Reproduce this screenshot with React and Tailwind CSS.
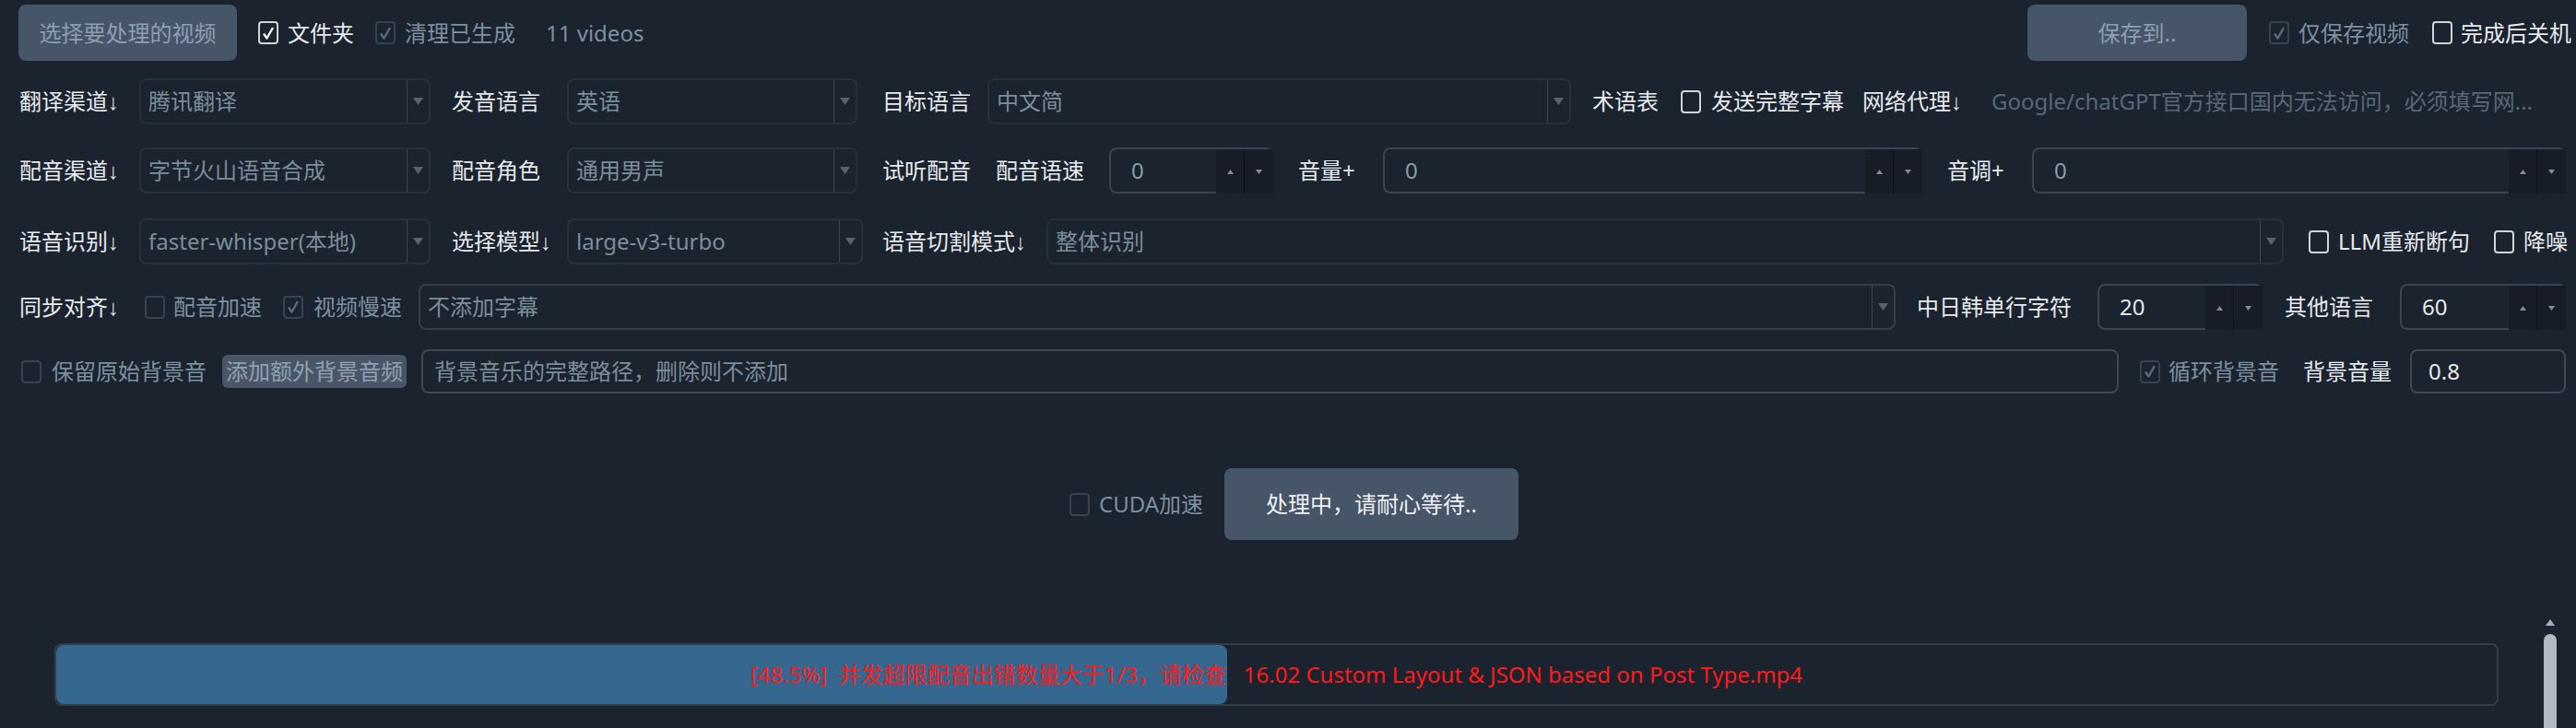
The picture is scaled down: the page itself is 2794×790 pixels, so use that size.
import React from 'react';

const Arrow = () => <span className="font-['Liberation_Sans'] text-[24px]">↓</span>;

function Check({ checked, disabled }) {
  const box = disabled
    ? 'flex h-[25px] w-[22px] shrink-0 items-center justify-center rounded-[4px] border-2 border-[#364352]'
    : 'flex h-[25px] w-[22px] shrink-0 items-center justify-center rounded-[4px] border-2 border-[#cfd4d9]';
  return (
    <span className={box}>
      {checked && (
        <svg width="14" height="16" viewBox="0 0 14 16">
          <path d="M2 8.5 L5.5 13.5 L12 2" fill="none" stroke={disabled ? '#5b6b79' : '#f2f4f6'} strokeWidth="2.4" strokeLinejoin="round" />
        </svg>
      )}
    </span>
  );
}

function Combo({ className, text }) {
  return (
    <div className={`flex h-[50px] shrink-0 items-stretch rounded-[8px] border-2 border-[#26313e] ${className}`}>
      <div className="flex flex-1 items-center overflow-hidden whitespace-nowrap pl-[8px] text-[#7b8d9b]">{text}</div>
      <div className="flex w-[24px] items-center justify-center border-l border-[#3a4553]">
        <svg width="11" height="8" viewBox="0 0 11 8">
          <path d="M0 0 H11 L5.5 8 Z" fill="#56626f" />
        </svg>
      </div>
    </div>
  );
}

function Spin({ className, value, light }) {
  return (
    <div className={`flex h-[50px] shrink-0 items-stretch rounded-[8px] border-2 border-[#3a4554] ${className}`}>
      <div className={light ? 'flex flex-1 items-center pl-[22px] text-[#e6eaee]' : 'flex flex-1 items-center pl-[22px] text-[#8a9dac]'}>{value}</div>
      <div className="-mb-[2px] -mr-[2px] flex">
        <div className="flex w-[31px] items-center justify-center border-r border-[#0e141b] bg-[#161d26]">
          <svg width="7" height="5" viewBox="0 0 7 5"><path d="M0 5 H7 L3.5 0 Z" fill="#7e8d9a" /></svg>
        </div>
        <div className="flex w-[31px] items-center justify-center bg-[#161d26]">
          <svg width="7" height="5" viewBox="0 0 7 5"><path d="M0 0 H7 L3.5 5 Z" fill="#7e8d9a" /></svg>
        </div>
      </div>
    </div>
  );
}

export default function App() {
  return (
    <div className="flex h-[790px] w-full flex-col overflow-hidden whitespace-nowrap bg-[#1b232e] font-['Noto_Sans','Noto_Sans_CJK_SC',sans-serif] text-[24px] leading-none text-[#e6eaee]">
      {/* row 0 */}
      <div className="mt-[5px] flex h-[61px] items-center pr-[5px]">
        <button className="ml-[20px] flex h-[61px] w-[237px] shrink-0 items-center justify-center rounded-[8px] bg-[#475569] text-[#8c9fb0]">选择要处理的视频</button>
        <span className="ml-[23px]"><Check checked /></span>
        <span className="ml-[10px] shrink-0">文件夹</span>
        <span className="ml-[23px]"><Check checked disabled /></span>
        <span className="ml-[10px] shrink-0 text-[#7b90a1]">清理已生成</span>
        <span className="ml-[33px] shrink-0 text-[#7b90a1]">11 videos</span>
        <div className="ml-auto flex items-center">
          <button className="flex h-[61px] w-[238px] items-center justify-center rounded-[8px] bg-[#475569] text-[#8c9fb0]">保存到..</button>
          <span className="ml-[24px]"><Check checked disabled /></span>
          <span className="ml-[10px] text-[#7b90a1]">仅保存视频</span>
          <span className="ml-[25px]"><Check /></span>
          <span className="ml-[9px]">完成后关机</span>
        </div>
      </div>

      {/* row 1 */}
      <div className="mt-[19px] flex h-[50px] items-center pr-[11px]">
        <span className="ml-[21px] w-[130px] shrink-0">翻译渠道<Arrow /></span>
        <Combo className="w-[316px]" text="腾讯翻译" />
        <span className="ml-[23px] w-[125px] shrink-0">发音语言</span>
        <Combo className="w-[315px]" text="英语" />
        <span className="ml-[27px] w-[114px] shrink-0">目标语言</span>
        <Combo className="w-[633px]" text="中文简" />
        <span className="ml-[23px] w-[96px] shrink-0">术语表</span>
        <Check />
        <span className="ml-[11px] shrink-0">发送完整字幕</span>
        <span className="ml-[20px] shrink-0">网络代理<Arrow /></span>
        <div className="ml-[19px] flex h-[50px] min-w-0 flex-1 items-center overflow-hidden pl-[13px] text-[#56687a]">Google/chatGPT官方接口国内无法访问，必须填写网...</div>
      </div>

      {/* row 2 */}
      <div className="mt-[25px] flex h-[50px] items-center pr-[11px]">
        <span className="ml-[21px] w-[130px] shrink-0">配音渠道<Arrow /></span>
        <Combo className="w-[316px]" text="字节火山语音合成" />
        <span className="ml-[23px] w-[125px] shrink-0">配音角色</span>
        <Combo className="w-[315px]" text="通用男声" />
        <span className="ml-[27px] w-[123px] shrink-0">试听配音</span>
        <span className="w-[123px] shrink-0">配音语速</span>
        <Spin className="w-[178px]" value="0" />
        <span className="ml-[27px] w-[92px] shrink-0">音量+</span>
        <Spin className="w-[585px]" value="0" />
        <span className="ml-[27px] w-[92px] shrink-0">音调+</span>
        <Spin className="min-w-0 flex-1" value="0" />
      </div>

      {/* row 3 */}
      <div className="mt-[27px] flex h-[50px] items-center pr-[11px]">
        <span className="ml-[21px] w-[130px] shrink-0">语音识别<Arrow /></span>
        <Combo className="w-[316px]" text="faster-whisper(本地)" />
        <span className="ml-[23px] w-[125px] shrink-0">选择模型<Arrow /></span>
        <Combo className="w-[321px]" text="large-v3-turbo" />
        <span className="ml-[21px] w-[178px] shrink-0">语音切割模式<Arrow /></span>
        <Combo className="w-[1342px]" text="整体识别" />
        <span className="ml-[27px]"><Check /></span>
        <span className="ml-[10px] shrink-0">LLM重新断句</span>
        <span className="ml-[26px]"><Check /></span>
        <span className="ml-[10px] shrink-0">降噪</span>
      </div>

      {/* row 4 */}
      <div className="mt-[21px] flex h-[50px] items-center pr-[11px]">
        <span className="ml-[21px] w-[136px] shrink-0">同步对齐<Arrow /></span>
        <Check disabled />
        <span className="ml-[9px] shrink-0 text-[#7b90a1]">配音加速</span>
        <span className="ml-[23px]"><Check checked disabled /></span>
        <span className="ml-[11px] shrink-0 text-[#7b90a1]">视频慢速</span>
        <Combo className="ml-[18px] w-[1602px] !border-[#343f4d]" text="不添加字幕" />
        <span className="ml-[23px] w-[196px] shrink-0">中日韩单行字符</span>
        <Spin className="w-[179px]" value="20" light />
        <span className="ml-[24px] w-[125px] shrink-0">其他语言</span>
        <Spin className="min-w-0 flex-1" value="60" light />
      </div>

      {/* row 5 */}
      <div className="mt-[21px] flex h-[48px] items-center pr-[11px]">
        <span className="ml-[23px]"><Check disabled /></span>
        <span className="ml-[11px] shrink-0 text-[#7b90a1]">保留原始背景音</span>
        <button className="ml-[17px] flex h-[36px] w-[200px] shrink-0 items-center justify-center rounded-[6px] bg-[#4a5668] text-[#8fa1b2]">添加额外背景音频</button>
        <div className="ml-[16px] flex h-[48px] w-[1841px] shrink-0 items-center rounded-[8px] border-2 border-[#3c4858] pl-[12px] text-[#7b8d9b]">背景音乐的完整路径，删除则不添加</div>
        <span className="ml-[23px]"><Check checked disabled /></span>
        <span className="ml-[9px] shrink-0 text-[#7b90a1]">循环背景音</span>
        <span className="ml-[26px] w-[116px] shrink-0">背景音量</span>
        <div className="flex h-[48px] min-w-0 flex-1 items-center rounded-[8px] border-2 border-[#3c4858] pl-[18px]">0.8</div>
      </div>

      {/* start row */}
      <div className="mt-[81px] flex h-[78px] items-center justify-center pl-[13px]">
        <Check disabled />
        <span className="ml-[10px] w-[121px] shrink-0 text-[#7b90a1]">CUDA加速</span>
        <button className="ml-[15px] flex h-[78px] w-[319px] shrink-0 items-center justify-center rounded-[8px] bg-[#475569] text-[#eef1f4]">处理中，请耐心等待..</button>
      </div>

      {/* progress scroll area */}
      <div className="mt-[79px] flex flex-1">
        <div className="flex-1 pl-[59px] pr-[45px] pt-[33px]">
          <div className="relative h-[68px] rounded-[8px] border-2 border-[#343e4b]">
            <div className="h-full w-[1270px] rounded-[8px] bg-[#36678f]" />
            <div className="absolute inset-0 flex items-center justify-center whitespace-pre text-[#ff1a1a]">
              {'[48.5%]  并发超限配音出错数量大于1/3，请检查   16.02 Custom Layout & JSON based on Post Type.mp4'}
            </div>
          </div>
        </div>
        <div className="mr-[18px] flex w-[21px] flex-col items-center">
          <svg className="mt-[7px]" width="10" height="7" viewBox="0 0 10 7"><path d="M0 7 H10 L5 0 Z" fill="#a6aeb6" /></svg>
          <div className="mt-[9px] w-[14px] flex-1 rounded-t-[7px] bg-[#b2b9c0]" />
        </div>
      </div>
    </div>
  );
}
